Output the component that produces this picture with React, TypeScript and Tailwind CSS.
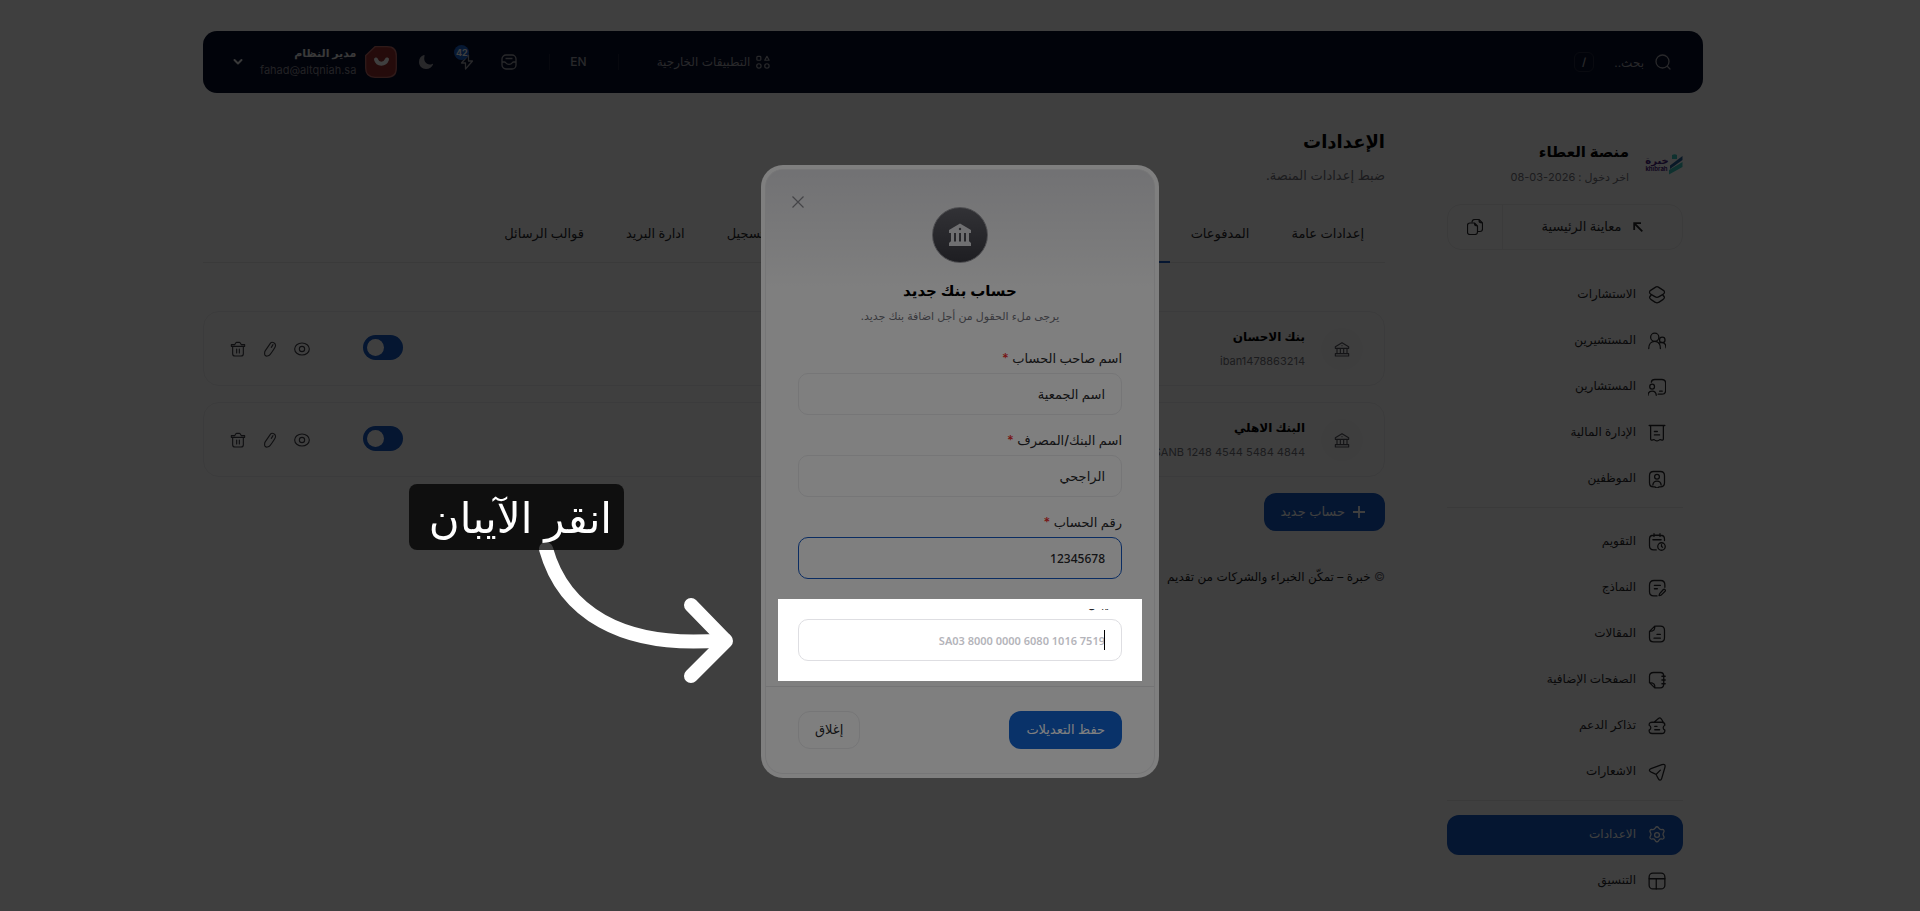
import type { ReactNode } from "react";

type IconProps = { children: ReactNode; size?: string };

function Icon({ children, size = "size-[18px]" }: IconProps) {
  return (
    <svg
      viewBox="0 0 24 24"
      className={`${size} shrink-0`}
      fill="none"
      stroke="currentColor"
      strokeWidth="1.7"
      strokeLinecap="round"
      strokeLinejoin="round"
      aria-hidden="true"
    >
      {children}
    </svg>
  );
}

const layers = (
  <>
    <path d="M10.2 1.500a3.500 3.500 0 0 1 3.600 0l6.700 4.300c2 1.400 2 3.600 0 5l-5.700 3.400a5.500 5.500 0 0 1-5.600 0l-5.700-3.400c-2-1.400-2-3.600 0-5z" />
    <path d="M4 12.500c-2.600 2-2.600 4 .2 5.700l5.500 3.600a4 4 0 0 0 4.600 0l5.500-3.600c2.800-1.700 2.800-3.700.2-5.700" />
  </>
);
const people = (
  <>
    <circle cx="9" cy="7" r="5.5" />
    <path d="M1 22c0-6 3.500-9.500 8-9.500s7.500 3.500 7.500 9.500" />
    <circle cx="19" cy="10.5" r="3.7" />
    <path d="M14.500 15c5-2.500 9.500-.5 9.500 6" />
  </>
);
const consultant = (
  <>
    <path d="M4.500 5.500C4.800 3 6 2 9 2h9.500C22 2 23.500 3.500 23.500 7v9.500c0 3.500-1.500 5-5 5h-5" />
    <path d="M15.500 17.500h3.500" />
    <circle cx="5.500" cy="11.500" r="3.2" />
    <path d="M0 23c.3-7.500 10.700-7.500 11 0" />
  </>
);
const invoice = (
  <>
    <path d="M1.500 2h21M3.500 2v17.500c0 2 1 2.500 2.800 1.700 1.200-.6 2-.6 3 .3 1.700 1.400 3.600 1.400 5.300 0 1-.9 1.900-.9 3.100-.3 1.800.8 2.800.3 2.800-1.700V2" />
    <path d="M8.500 10h4M8.500 14.500h7" />
  </>
);
const employee = (
  <>
    <path d="M9 22.500H7.500c-4 0-5.500-1.500-5.500-5.500V7.500c0-4 1.500-5.500 5.500-5.500h9c4 0 5.500 1.500 5.500 5.500V17c0 4-1.500 5.500-5.500 5.500H15l-2 1.200a2 2 0 0 1-2 0z" />
    <circle cx="12" cy="9" r="3.2" />
    <path d="M6.500 20c.5-7 10.500-7 11 0" />
  </>
);
const calendar = (
  <>
    <path d="M22 10V8c0-4-1.500-5-5.500-5h-9C3.500 3 2 4 2 8v9c0 4 1.500 5.500 5.500 5.500H11M8 1v3.500M16 1v3.500M6.500 9h11" />
    <circle cx="18" cy="18" r="5" />
    <path d="M18 15.500V18l1.500 1" />
  </>
);
const form = (
  <>
    <path d="M22.500 11V8c0-4-1.500-6-5.500-6H8C4 2 2 4 2 8v9c0 4 2 5.500 5.500 5.500H12M8.500 8.500h8M8.500 13h4" />
    <path d="m15.500 19.500 5-5.500c1.500-1.200 3.500.8 2.300 2.300l-5.300 5.200-2.800.7z" />
  </>
);
const article = (
  <path d="M10 1.500h6.500c4 0 5.500 2 5.500 5.500v10c0 4-1.500 5.500-5.500 5.500h-9C3.500 22.500 2 21 2 17V8.500l7-7C9.500 5.500 8.500 8.500 2 8.500M12 12.500h4.500M8 17.500h8.500" />
);
const notebook = (
  <path d="M10 22.500h6.500c3.500 0 4.500-2 4.500-5.500V7c0-3.500-1-5-4.500-5h-9C3.500 2 2 3.500 2 7v8.500l7 7C9.500 18.500 8.500 15.500 2 15.500M18.500 7H23M18.500 12H23M18.500 17H23" />
);
const ticket = (
  <path d="M1.500 11c0-3 1-4 4-4h13c3 0 4 1 4 4-3 1.500-3 5 0 6.500 0 3.500-1 4.500-4 4.500h-13c-3 0-4-1-4-4.500C4.500 16 4.500 12.500 1.500 11zM8 7l5.500-4.700c2-1.700 3-1.400 4.300.4L20.500 7M9 12.500h3M9 17h6.500" />
);
const send = (
  <path d="m4 7.500 14.500-5.200c3.500-1.200 5 .2 4 3.700l-4.200 14.500c-1 3.200-3 3.300-4.600.3l-2.400-4.500c-.5-1-.9-1.400-1.900-1.900l-5.100-2.300C1 10.500 1 8.700 4 7.500zM11 15l5.500-5.500" />
);
const gear = (
  <>
    <circle cx="12" cy="12" r="3.2" />
    <path d="M10 2.200c1-1.600 3-1.600 4 0l.7 1.100c.7 1 1.600 1.500 2.800 1.400l1.600-.1c1.900 0 2.900 1.800 2 3.500l-.7 1.300c-.6 1.100-.6 2.100 0 3.200l.7 1.300c.9 1.700-.1 3.500-2 3.500l-1.600-.1c-1.200-.1-2.100.4-2.800 1.400l-.7 1.100c-1 1.600-3 1.600-4 0l-.7-1.100c-.7-1-1.600-1.500-2.800-1.400l-1.600.1c-1.900 0-2.900-1.800-2-3.500l.7-1.300c.6-1.100.6-2.100 0-3.200l-.7-1.300c-.9-1.700.1-3.500 2-3.500l1.600.1c1.200.1 2.100-.4 2.800-1.400z" />
  </>
);
const layout = (
  <>
    <rect x="1.500" y="1.500" width="21" height="21" rx="5" />
    <path d="M1.500 9h21M11 9v13.500" />
  </>
);
const bank = (
  <>
    <path d="M2 8.500 12 2.500l10 6V11H2zM4.500 11v8M9.500 11v8M14.500 11v8M19.500 11v8M2 19h20v3.500H2z" />
    <path d="M12 7h.01" />
  </>
);

type Item = { label: string; icon: ReactNode; active?: boolean };

const mainItems: Item[] = [
  { label: "الاستشارات", icon: layers },
  { label: "المستشيرين", icon: people },
  { label: "المستشارين", icon: consultant },
  { label: "الإدارة المالية", icon: invoice },
  { label: "الموظفين", icon: employee },
];
const contentItems: Item[] = [
  { label: "التقويم", icon: calendar },
  { label: "النماذج", icon: form },
  { label: "المقالات", icon: article },
  { label: "الصفحات الإضافية", icon: notebook },
  { label: "تذاكر الدعم", icon: ticket },
  { label: "الاشعارات", icon: send },
];
const systemItems: Item[] = [
  { label: "الاعدادات", icon: gear, active: true },
  { label: "التنسيق", icon: layout },
];

function NavGroup({ items }: { items: Item[] }) {
  return (
    <ul className="flex flex-col gap-1.5">
      {items.map((item) => (
        <li key={item.label}>
          <a
            href="#"
            className={`flex h-10 items-center gap-3 rounded-xl px-[17px] text-xs font-medium ${
              item.active ? "bg-[#1458c4] text-white" : "text-[#27272a]"
            }`}
          >
            <Icon>{item.icon}</Icon>
            <span className="pb-0.5">{item.label}</span>
          </a>
        </li>
      ))}
    </ul>
  );
}

function TopBar() {
  return (
    <header className="flex h-[62px] items-center rounded-[14px] bg-[#040c28] pr-8 pl-[30px] text-[#a1a1aa]">
      <div className="flex flex-1 items-center">
        <svg viewBox="0 0 16 16" className="size-4" fill="none" stroke="currentColor" strokeWidth="1.3" aria-hidden="true">
          <circle cx="7.5" cy="7.5" r="6.5" />
          <path d="m12.500 12.500 2.500 2.500" strokeLinecap="round" />
        </svg>
        <input
          aria-label="بحث"
          placeholder="بحث.."
          className="mr-[11px] h-6 w-[50px] bg-transparent text-xs outline-none placeholder:text-[#a1a1aa]"
        />
        <kbd className="flex size-5 items-center justify-center rounded-md border border-[#262b40] font-['Inter'] text-[11px] font-semibold">
          /
        </kbd>
      </div>
      <button className="flex items-center gap-1.5 text-xs">
        <svg viewBox="0 0 16 16" className="size-[14px]" fill="none" stroke="currentColor" strokeWidth="1.4" aria-hidden="true">
          <circle cx="12.5" cy="12.5" r="2.5" />
          <path d="m12.500 1.500 2.500 4.500h-5z" strokeLinejoin="round" />
          <rect x="1" y="1.500" width="4.500" height="4.500" rx="1" />
          <circle cx="3.300" cy="12.500" r="2.500" />
        </svg>
        التطبيقات الخارجية
      </button>
      <span className="mr-[38px] ml-[31px] h-4 w-px bg-[#1d2338]" />
      <button className="text-xs font-medium">EN</button>
      <span className="mr-5 ml-8 h-4 w-px bg-[#1d2338]" />
      <button aria-label="الرسائل" className="ml-[26px]">
        <svg viewBox="0 0 16 16" className="size-4" fill="none" stroke="currentColor" strokeWidth="1.3" aria-hidden="true">
          <rect x="1" y="1" width="14" height="14" rx="4" />
          <path d="M4.500 4.500h7M1 8h2.500c1 0 1.300.5 1.700 1.200.8 1.500 4.800 1.500 5.600 0C11.200 8.500 11.500 8 12.500 8H15" />
        </svg>
      </button>
      <button aria-label="التنبيهات" className="relative ml-[25px]">
        <svg viewBox="0 0 16 16" className="size-4" fill="none" stroke="currentColor" strokeWidth="1.3" strokeLinejoin="round" aria-hidden="true">
          <path d="M9.500 1 2.500 9H6.500v6l7-8H9.500z" />
        </svg>
        <span className="absolute -top-[9px] right-1.5 flex size-[15px] items-center justify-center rounded-full bg-[#1a62cf] text-[9px] font-bold text-white">
          42
        </span>
      </button>
      <button aria-label="الوضع الداكن" className="ml-[21px]">
        <svg viewBox="0 0 16 16" className="size-4" fill="currentColor" aria-hidden="true">
          <path d="M6 1C2.800 1.800 1 4.500 1 8c0 4 3 7 7 7 3.500 0 6-2 7-4.500.2-.6-.2-.9-.8-.6-4.700 2-9.200-2-7.700-7.700C6.700 1.400 6.500.9 6 1z" />
        </svg>
      </button>
      <svg viewBox="0 0 32 32" className="ml-[9px] size-8" role="img" aria-label="مدير النظام">
        <path d="M10 .7h12c6.500 0 9.300 2.800 9.300 9.300v12c0 6.500-2.800 9.300-9.300 9.300H10C3.500 31.300.7 28.500.7 22V9.500z" fill="#962f2d" stroke="#bd6967" strokeWidth="1.3" />
        <path d="M11 13.500c1.500 5.500 9 5.500 11 0" fill="none" stroke="#fff" strokeWidth="4" strokeLinecap="round" />
      </svg>
      <button className="flex items-center gap-[17px]">
        <span className="flex flex-col text-right text-[11px] leading-[17px]">
          <span className="font-semibold text-[#e4e4e7]">مدير النظام</span>
          <span className="text-[#8b8b94]">fahad@altqniah.sa</span>
        </span>
        <svg viewBox="0 0 10 10" className="size-2.5" fill="none" stroke="#e4e4e7" strokeWidth="2" aria-hidden="true">
          <path d="m1.500 3 3.500 3.500L8.500 3" strokeLinecap="round" strokeLinejoin="round" />
        </svg>
      </button>
    </header>
  );
}

function Sidebar() {
  return (
    <aside className="flex w-[236px] shrink-0 flex-col pt-[47px]">
      <div className="flex items-center gap-4">
        <svg viewBox="0 0 38 22" className="h-[22px] w-[38px]" role="img" aria-label="خبرة">
          <path d="M27 2q3-1.500 5 0v4h-5z" fill="#3cc6bd" />
          <path d="M25 12.500 37.500 3v4L25 16z" fill="#24629c" />
          <path d="M24 17 37.500 9v5L24 21.500z" fill="#3cc6bd" />
          <text x="12" y="11" textAnchor="middle" fontSize="10" fontWeight="700" fill="#4a2080" fontFamily="DejaVu Sans">خبرة</text>
          <text x="11.500" y="18" textAnchor="middle" fontSize="6" fontWeight="700" fill="#4a2080" fontFamily="Inter">khibrah</text>
        </svg>
        <div>
          <h2 className="text-[15px] leading-6 font-semibold text-black">منصة العطاء</h2>
          <p className="pt-0.5 text-[11px] leading-[22px] text-[#71717a]">اخر دخول : 2026-03-08</p>
        </div>
      </div>
      <div className="mt-4 flex h-[46px] rounded-[14px] border border-[#ececee] text-[#27272a]">
        <a href="#" className="flex flex-1 items-center justify-center gap-3 text-[13px] font-medium">
          <svg viewBox="0 0 10 10" className="size-2.5" fill="none" stroke="currentColor" strokeWidth="1.8" aria-hidden="true">
            <path d="M1.200 8V1.200H8M1.500 1.500 9.300 9.300" />
          </svg>
          معاينة الرئيسية
        </a>
        <button aria-label="نسخ الرابط" className="flex w-[55px] items-center justify-center border-r border-[#ececee]">
          <svg viewBox="0 0 16 16" className="size-4" fill="none" stroke="currentColor" strokeWidth="1.2" strokeLinejoin="round" aria-hidden="true">
            <path d="M3 4h4.500l3 3v6c0 1.700-.8 2.500-2.500 2.500H3C1.300 15.500.5 14.700.5 13V6.500C.5 4.800 1.300 4 3 4zM7.500 4c0 2.500.5 3 3 3" />
            <path d="M5 3.500C5 1.500 6 .5 8 .5h4L15.500 4v6c0 1.700-.7 2.500-2.500 2.500h-2M12 .5c0 3 .5 3.500 3.500 3.500" />
          </svg>
        </button>
      </div>
      <nav className="mt-[25px]">
        <NavGroup items={mainItems} />
        <hr className="mt-2 mb-3.5 border-[#e9e9eb]" />
        <NavGroup items={contentItems} />
        <hr className="mt-2 mb-3.5 border-[#e9e9eb]" />
        <NavGroup items={systemItems} />
      </nav>
    </aside>
  );
}

const tabs = [
  "إعدادات عامة",
  "المدفوعات",
  "إدارة الحسابات البنكية",
  "الشروط والأحكام العامة",
  "إعدادات التسجيل",
  "ادارة البريد",
  "قوالب الرسائل",
];

const accounts = [
  { name: "بنك الاحسان", iban: "iban1478863214" },
  { name: "البنك الاهلي", iban: "SANB 1248 4544 5484 4844" },
];

function AccountRow({ name, iban }: { name: string; iban: string }) {
  return (
    <li className="flex h-[75px] items-center rounded-2xl border border-[#eeeef0] pr-[21px] pl-[26px]">
      <span className="flex size-[42px] items-center justify-center rounded-full bg-[#f9f9fa] text-[#52525b]">
        <Icon size="size-4">{bank}</Icon>
      </span>
      <div className="mr-4 flex-1">
        <h3 className="text-xs leading-6 font-semibold text-black">{name}</h3>
        <p dir="ltr" className="text-right text-[11px] leading-6 text-[#71717a]">{iban}</p>
      </div>
      <label className="relative mb-0.5 ml-[53px] flex h-[25px] w-10 items-center justify-end rounded-full bg-[#1458c4] px-1">
        <input type="checkbox" defaultChecked aria-label={name} className="absolute inset-0 appearance-none" />
        <span className="size-[17px] rounded-full bg-white" />
      </label>
      <div className="flex items-center gap-4 text-[#3f3f46]">
        <button aria-label="عرض">
          <Icon size="size-4">
            <ellipse cx="12" cy="12" rx="11" ry="9" />
            <circle cx="12" cy="12" r="4" />
          </Icon>
        </button>
        <button aria-label="تعديل">
          <Icon size="size-4">
            <path d="M5 14.500 12.500 3.500c2.500-3.500 9-.5 7.500 4.500-.5 1.500-5 8.500-8 12.500-1.500 2-6.500 3-7.500 1-.5-1.500-.7-5.200.5-7zM14 9.500l2.500-4" />
          </Icon>
        </button>
        <button aria-label="حذف">
          <Icon size="size-4">
            <path d="M2 8h20V5.500h-5L15.500 3q-.5-1-1.500-1h-4Q9 2 8.500 3L7 5.500H2zM4 8v11q0 3.500 3.500 3.500h9Q20 22.500 20 19V8M10 12v6M14 12v6" />
          </Icon>
        </button>
      </div>
    </li>
  );
}

function Settings() {
  return (
    <main className="min-w-0 flex-1 pt-[34px]">
      <h1 className="text-lg leading-[30px] font-semibold text-black">الإعدادات</h1>
      <p className="mt-1 text-[13px] leading-[28px] text-[#71717a]">ضبط إعدادات المنصة.</p>
      <div role="tablist" className="mt-[17px] flex h-[57px] border-b border-[#e9e9eb] text-[13px] font-medium whitespace-nowrap text-[#27272a]">
        {tabs.map((tab, i) => (
          <button
            key={tab}
            role="tab"
            aria-selected={i === 2}
            className={`-mb-px border-b-2 px-[21px] ${i === 2 ? "border-[#1458c4]" : "border-transparent"}`}
          >
            {tab}
          </button>
        ))}
      </div>
      <ul className="mt-12 flex flex-col gap-4">
        {accounts.map((a) => (
          <AccountRow key={a.name} {...a} />
        ))}
      </ul>
      <button className="mt-4 flex h-[38px] items-center gap-2 rounded-xl bg-[#1458c4] pr-5 pl-4 text-[13px] font-medium text-white">
        <svg viewBox="0 0 12 12" className="size-3" stroke="currentColor" strokeWidth="1.8" aria-hidden="true">
          <path d="M6 0v12M0 6h12" />
        </svg>
        حساب جديد
      </button>
      <p className="mt-[34px] text-xs leading-6 text-[#18181b]">
        <span className="text-[#71717a]">©</span> خبرة – تمكّن الخبراء والشركات من تقديم
      </p>
    </main>
  );
}

type FieldProps = { id: string; label: string; value: string; focused?: boolean };

function Field({ id, label, value, focused }: FieldProps) {
  return (
    <div className="flex flex-col">
      <label htmlFor={id} className="mb-1 text-[13px] leading-[22px] font-medium text-[#27272a]">
        {label} <span className="text-[#ef2b2b]">*</span>
      </label>
      <input
        id={id}
        defaultValue={value}
        className={`h-[42px] rounded-[10px] border px-4 font-['Noto_Sans','DejaVu_Sans',sans-serif] font-medium text-[#27272a] outline-none ${
          focused ? "border-[#1458c4] text-xs" : "border-[#ececee] text-[13px]"
        }`}
      />
    </div>
  );
}

function AccountDialog() {
  return (
    <section role="dialog" aria-labelledby="dialog-title" className="w-[398px] rounded-[22px] bg-white p-1">
      <div className="rounded-[18px] border border-[#ececee] bg-linear-to-b from-[#e4e4e8] to-white to-20%">
        <div className="relative flex flex-col items-center pt-[37px]">
          <button aria-label="إغلاق النافذة" className="absolute top-[26px] left-[26px] text-[#88888f]">
            <svg viewBox="0 0 12 12" className="size-3" stroke="currentColor" strokeWidth="1.2" aria-hidden="true">
              <path d="M.5.5l11 11M11.500.5l-11 11" />
            </svg>
          </button>
          <span className="flex size-[56px] items-center justify-center rounded-full border border-[#9c9ca2] bg-linear-to-b from-[#64646c] to-[#3c3c44] text-[#dedee2]">
            <svg viewBox="0 0 24 24" className="size-6" fill="currentColor" aria-hidden="true">
              <path fillRule="evenodd" d="M12 .5 23 7v3H1V7zM12 4.800a1.200 1.200 0 1 0 0 2.400 1.200 1.200 0 0 0 0-2.400z" />
              <path d="M3 10h3v9H3zM8 10h3v9H8zM13 10h3v9h-3zM18 10h3v9h-3zM2.500 18.500h19L23 20v3H1v-3z" />
            </svg>
          </span>
          <h2 id="dialog-title" className="mt-4 text-[15px] leading-6 font-semibold text-black">حساب بنك جديد</h2>
          <p className="mt-[3px] text-[11px] leading-5 text-[#71717a]">يرجى ملء الحقول من أجل اضافة بنك جديد.</p>
        </div>
        <div className="flex flex-col gap-3.5 px-8 pt-[21px] pb-[25px]">
          <Field id="owner" label="اسم صاحب الحساب" value="اسم الجمعية" />
          <Field id="bank" label="اسم البنك/المصرف" value="الراجحي" />
          <Field id="number" label="رقم الحساب" value="12345678" focused />
          <div className="relative mt-4 flex flex-col">
            <label htmlFor="iban" className="mb-2 flex h-0.5 items-end overflow-hidden pr-2.5 text-[13px] leading-4 font-medium text-[#27272a]">
              آيبان
            </label>
            <input
              id="iban"
              placeholder="SA03 8000 0000 6080 1016 7519"
              dir="ltr"
              className="h-[42px] rounded-[10px] border border-[#dedee2] px-4 text-right font-['Noto_Sans','DejaVu_Sans',sans-serif] text-[11px] font-semibold outline-none placeholder:text-[#b4b4ba]"
            />
            <span className="absolute right-[17px] bottom-[11px] h-5 w-px bg-black" />
            <span className="pointer-events-none absolute -inset-x-5 -top-2.5 -bottom-5 shadow-[0_0_0_3000px_rgba(0,0,0,0.5)]" />
          </div>
        </div>
        <div className="flex items-center justify-between border-t border-[#e9e9eb] px-8 py-6">
          <button className="h-[38px] rounded-xl bg-[#1264d2] px-[17px] text-[13px] font-medium text-white">حفظ التعديلات</button>
          <button className="h-[38px] rounded-xl border border-[#ececee] px-4 text-[13px] font-medium text-[#27272a]">إغلاق</button>
        </div>
      </div>
    </section>
  );
}

export default function App() {
  return (
    <div dir="rtl" className="relative h-screen overflow-hidden bg-white font-['Inter','DejaVu_Sans',sans-serif]">
      <div className="pt-[31px] pr-[14px]">
        <div className="mx-auto max-w-[1500px]">
          <TopBar />
          <div className="flex gap-[62px] pr-5">
            <Sidebar />
            <Settings />
          </div>
        </div>
      </div>
      <div className="fixed inset-0 flex items-center justify-center bg-black/50 pt-8">
        <AccountDialog />
      </div>
      <svg viewBox="0 0 200 160" className="absolute top-[535px] left-[534px] h-40 w-[200px]" fill="none" stroke="#fff" strokeWidth="14" strokeLinecap="round" strokeLinejoin="round" aria-hidden="true">
        <path d="M12 14C29 75 85 115 191 105" />
        <path d="m157 70 35 36-35 35" />
      </svg>
      <p className="absolute top-[484px] left-[409px] flex h-[66px] w-[215px] items-center rounded-lg bg-black/75 pr-3 text-[42px] whitespace-nowrap text-white">
        انقر الآيبان
      </p>
    </div>
  );
}
